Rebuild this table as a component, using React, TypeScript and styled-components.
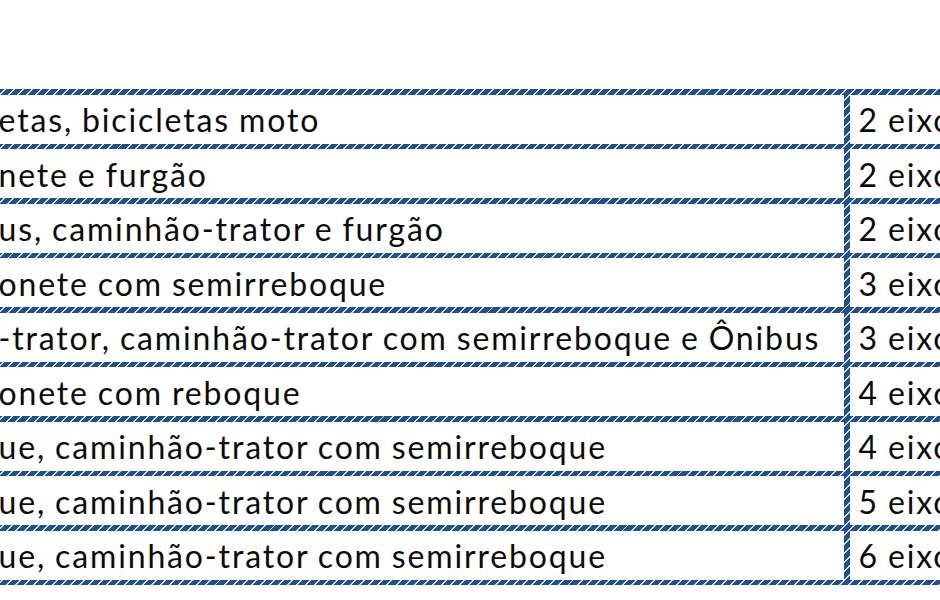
import { Fragment } from 'react';
import styled, { createGlobalStyle } from 'styled-components';

const GlobalStyle = createGlobalStyle`
    html, body {
        margin: 0;
        padding: 0;
        background: #ffffff;
        overflow: hidden;
    }
    body {
        width: 940px;
        height: 600px;
        font-family: Lato, 'Liberation Sans', sans-serif;
    }
`;

const Page = styled.div`
    width: 940px;
    height: 600px;
    overflow: hidden;
    padding-top: 89px;
    box-sizing: border-box;
`;

// the hatched blue rule between cells is the table background showing through the gaps
const Table = styled.div`
    display: grid;
    grid-template-columns: 858px 140px;
    grid-auto-rows: 49px;
    row-gap: 5.5px;
    column-gap: 6px;
    padding: 5.5px 5.5px;
    margin-left: -20px;
    width: max-content;
    background-color: #22508b;
    background-image: repeating-linear-gradient(
        135deg,
        transparent 0 4.2px,
        rgba(236, 241, 248, 0.9) 4.2px 5.6px,
        transparent 5.6px 6.4px
    );
`;

const Cell = styled.div<{ $first?: boolean }>`
    background: #ffffff;
    display: flex;
    align-items: center;
    padding: 1px 0 0 ${(p) => (p.$first ? '13px' : '9px')};
    font-size: 32px;
    letter-spacing: 1.85px;
    word-spacing: -1px;
    color: #0b0b0b;
    white-space: nowrap;
    overflow: hidden;
`;

const rows: [string, string][] = [
    ['etas, bicicletas moto', '2 eixos'],
    ['nete e furgão', '2 eixos'],
    ['us, caminhão-trator e furgão', '2 eixos'],
    ['onete com semirreboque', '3 eixos'],
    ['-trator, caminhão-trator com semirreboque e Ônibus', '3 eixos'],
    ['onete com reboque', '4 eixos'],
    ['ue, caminhão-trator com semirreboque', '4 eixos'],
    ['ue, caminhão-trator com semirreboque', '5 eixos'],
    ['ue, caminhão-trator com semirreboque', '6 eixos'],
];

export default function App() {
    return (
        <Page>
            <GlobalStyle />
            <Table>
                {rows.map(([kind, axles], i) => (
                    <Fragment key={i}>
                        <Cell $first>{kind}</Cell>
                        <Cell>{axles}</Cell>
                    </Fragment>
                ))}
            </Table>
        </Page>
    );
}
